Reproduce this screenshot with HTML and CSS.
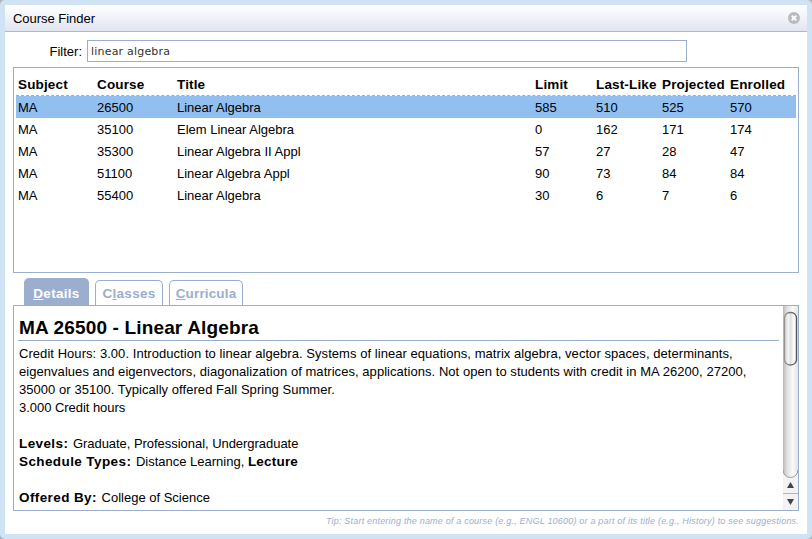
FILE: index.html
```
<!DOCTYPE html>
<html lang="en">
<head>
<meta charset="utf-8">
<title>Course Finder</title>
<link rel="stylesheet" href="styles.css">
</head>
<body>
<div class="dialog">
  <header class="titlebar">
    <span class="caption">Course Finder</span>
    <svg class="close" width="12" height="12" viewBox="0 0 12 12"><circle cx="6" cy="6" r="6" fill="#b9babd"/><path d="M3.7 3.7l4.6 4.6M8.3 3.7l-4.6 4.6" stroke="#fff" stroke-width="1.9"/></svg>
  </header>
  <main class="content">
    <div class="filter">
      <label for="filter">Filter:</label>
      <input id="filter" type="text" value="linear algebra">
    </div>
    <div class="courses">
      <div class="row head"><span>Subject</span><span>Course</span><span>Title</span><span>Limit</span><span>Last-Like</span><span>Projected</span><span>Enrolled</span></div>
      <div class="row selected"><span>MA</span><span>26500</span><span>Linear Algebra</span><span>585</span><span>510</span><span>525</span><span>570</span></div>
      <div class="row"><span>MA</span><span>35100</span><span>Elem Linear Algebra</span><span>0</span><span>162</span><span>171</span><span>174</span></div>
      <div class="row"><span>MA</span><span>35300</span><span>Linear Algebra II Appl</span><span>57</span><span>27</span><span>28</span><span>47</span></div>
      <div class="row"><span>MA</span><span>51100</span><span>Linear Algebra Appl</span><span>90</span><span>73</span><span>84</span><span>84</span></div>
      <div class="row"><span>MA</span><span>55400</span><span>Linear Algebra</span><span>30</span><span>6</span><span>7</span><span>6</span></div>
    </div>
    <nav class="tabs">
      <div class="tab active"><span><u>D</u>etails</span></div>
      <div class="tab classes"><span>C<u>l</u>asses</span></div>
      <div class="tab curricula"><span><u>C</u>urricula</span></div>
    </nav>
    <section class="details">
      <div class="text">
        <h1>MA 26500 - Linear Algebra</h1>
        <p class="wide">Credit Hours: 3.00. Introduction to linear algebra. Systems of linear equations, matrix algebra, vector spaces, determinants,</p>
        <p class="wide">eigenvalues and eigenvectors, diagonalization of matrices, applications. Not open to students with credit in MA 26200, 27200,</p>
        <p class="wide">35000 or 35100. Typically offered Fall Spring Summer.</p>
        <p class="tight">3.000 Credit hours</p>
        <p class="gap tight"><b>Levels:</b> Graduate, Professional, Undergraduate</p>
        <p><b>Schedule Types:</b> Distance Learning, <b class="link">Lecture</b></p>
        <p class="gap"><b>Offered By:</b> College of Science</p>
      </div>
      <svg class="scrollbar" width="15" height="204" viewBox="0 0 15 204">
        <defs>
          <linearGradient id="track"><stop offset="0" stop-color="#b8b8b8"/><stop offset=".25" stop-color="#dedede"/><stop offset=".65" stop-color="#fafafa"/><stop offset="1" stop-color="#e2e2e2"/></linearGradient>
          <linearGradient id="thumb"><stop offset="0" stop-color="#d2d2d2"/><stop offset=".35" stop-color="#f4f4f4"/><stop offset=".5" stop-color="#dedede"/><stop offset=".8" stop-color="#fff"/><stop offset="1" stop-color="#ddd"/></linearGradient>
          <linearGradient id="edge"><stop offset="0" stop-color="#929292"/><stop offset="1" stop-color="#555"/></linearGradient>
        </defs>
        <rect width="15" height="204" fill="#f3f3f3"/>
        <path d="M0 0h15v164a7.5 7.5 0 0 1-15 0z" fill="url(#track)"/>
        <path d="M0 164a7.5 7.5 0 0 0 15 0" fill="none" stroke="#9b9b9b"/>
        <rect x="1.5" y="6.5" width="12" height="52.5" rx="5.5" fill="url(#thumb)" stroke="url(#edge)" stroke-width="1.3"/>
        <path d="M0 187.5h15" stroke="#b5b5b5"/>
        <path d="M4 182h7l-3.5-6zM4 193h7l-3.5 6z" fill="#444"/>
      </svg>
    </section>
    <footer class="tip"><span>Tip: Start entering the name of a course (e.g., ENGL 10600) or a part of its title (e.g., History) to see suggestions.</span></footer>
  </main>
</div>
</body>
</html>
```
FILE: styles.css
```
* { box-sizing: border-box; }
body {
  margin: 0;
  background: #aeb3b9;
  color: #000;
  font: 13px/18px "Liberation Sans", Arial, sans-serif;
  white-space: nowrap;
  overflow: hidden;
}
.dialog {
  width: 812px;
  height: 539px;
  border: 5px solid #d0e3f5;
  border-radius: 5px;
  background: #fff;
}
.titlebar {
  display: flex;
  align-items: center;
  justify-content: space-between;
  height: 27px;
  padding: 0 7px 0 8px;
  border-bottom: 1px solid #b4b8c2;
  background: linear-gradient(#fff, #e1e5f0);
}
.caption { padding-top: 1px; letter-spacing: -.03px; }
.content { padding: 8px 8px 0; }
.filter { display: flex; align-items: center; height: 22px; }
.filter label { width: 74px; padding: 2px 5px 0 0; text-align: right; }
.filter input {
  width: 600px;
  height: 22px;
  padding: 0 3px;
  border: 1px solid #9caece;
  outline: 0;
  color: #333;
  font: 11px "DejaVu Sans", sans-serif;
  letter-spacing: .2px;
}
.courses {
  height: 206px;
  margin-top: 5px;
  padding: 6px 2px 0;
  border: 1px solid #9caece;
}
.row {
  display: grid;
  grid-template-columns: 79px 80px 358px 61px 66px 68px 66px;
  height: 22px;
  padding-left: 2px;
  line-height: 24px;
}
.row.head {
  border-bottom: 1px dashed #9caece;
  font-size: 13.5px;
  font-weight: bold;
  line-height: 22px;
  letter-spacing: .15px;
}
.row.selected { background: #91bfef; }
.tabs {
  display: flex;
  align-items: flex-end;
  gap: 6px;
  height: 32px;
  padding-left: 11px;
}
.tab {
  display: flex;
  justify-content: center;
  width: 68px;
  height: 25px;
  border: 1px solid #9caece;
  border-bottom: 0;
  border-radius: 5px 5px 0 0;
  color: #9caece;
  font-size: 13.5px;
  font-weight: bold;
  line-height: 25px;
  letter-spacing: .3px;
}
.tab.active {
  width: 65px;
  height: 27px;
  padding-top: 2px;
  background: #9caece;
  color: #fff;
}
.tab.curricula { width: 74px; letter-spacing: .15px; }
.details {
  display: flex;
  justify-content: space-between;
  height: 206px;
  border: 1px solid #9caece;
}
.text { width: 765px; padding-left: 4px; }
h1 {
  height: 35px;
  margin: 0 0 4px;
  padding: 9px 0 0 1px;
  border-bottom: 1px solid #9caece;
  font-size: 19px;
  line-height: 26px;
  letter-spacing: .15px;
}
p { height: 18px; margin: 0; padding-left: 1px; }
p.wide { letter-spacing: .05px; }
p.tight { letter-spacing: -.04px; }
.gap { margin-top: 18px; }
p b {
  margin-right: 1px;
  font-size: 13.5px;
  letter-spacing: .4px;
}
p b.link { letter-spacing: .2px; }
.tip {
  display: flex;
  justify-content: flex-end;
  padding-top: 1px;
  color: #9caece;
  font-size: 9px;
  font-style: italic;
  letter-spacing: .2px;
}
```
